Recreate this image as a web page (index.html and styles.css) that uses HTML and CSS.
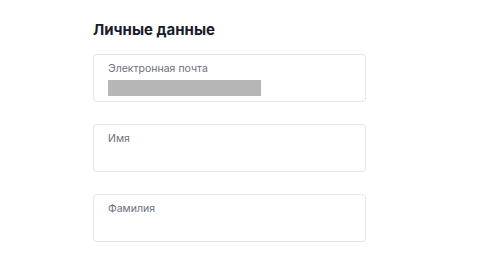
FILE: index.html
```html
<!DOCTYPE html>
<html lang="ru">
<head>
<meta charset="utf-8">
<link rel="stylesheet" href="styles.css">
</head>
<body>
<section class="panel">
  <h2 class="title">Личные данные</h2>
  <div class="fields">
    <div class="field">
      <div class="label">Электронная почта</div>
      <div class="masked"></div>
    </div>
    <div class="field">
      <div class="label">Имя</div>
    </div>
    <div class="field">
      <div class="label">Фамилия</div>
    </div>
  </div>
</section>
</body>
</html>
```
FILE: styles.css
```css
html, body {
  margin: 0;
  padding: 0;
  background: #ffffff;
}
body {
  width: 500px;
  height: 260px;
  overflow: hidden;
  font-family: Inter, "Noto Sans", sans-serif;
}
.panel {
  padding: 19px 0 0 93px;
}
.title {
  margin: 0;
  font-size: 15px;
  line-height: 22px;
  font-weight: 700;
  color: #1b1b2b;
  letter-spacing: 0;
}
.fields {
  margin-top: 13px;
  display: flex;
  flex-direction: column;
  gap: 22px;
}
.field {
  box-sizing: border-box;
  width: 273px;
  height: 48px;
  border: 1px solid #e4e5ea;
  border-radius: 4px;
  padding: 7px 14px 0;
}
.label {
  font-size: 10.5px;
  line-height: 14px;
  color: #6f6f7c;
}
.masked {
  margin-top: 4px;
  width: 153px;
  height: 16px;
  background: #b6b6b6;
}
```
